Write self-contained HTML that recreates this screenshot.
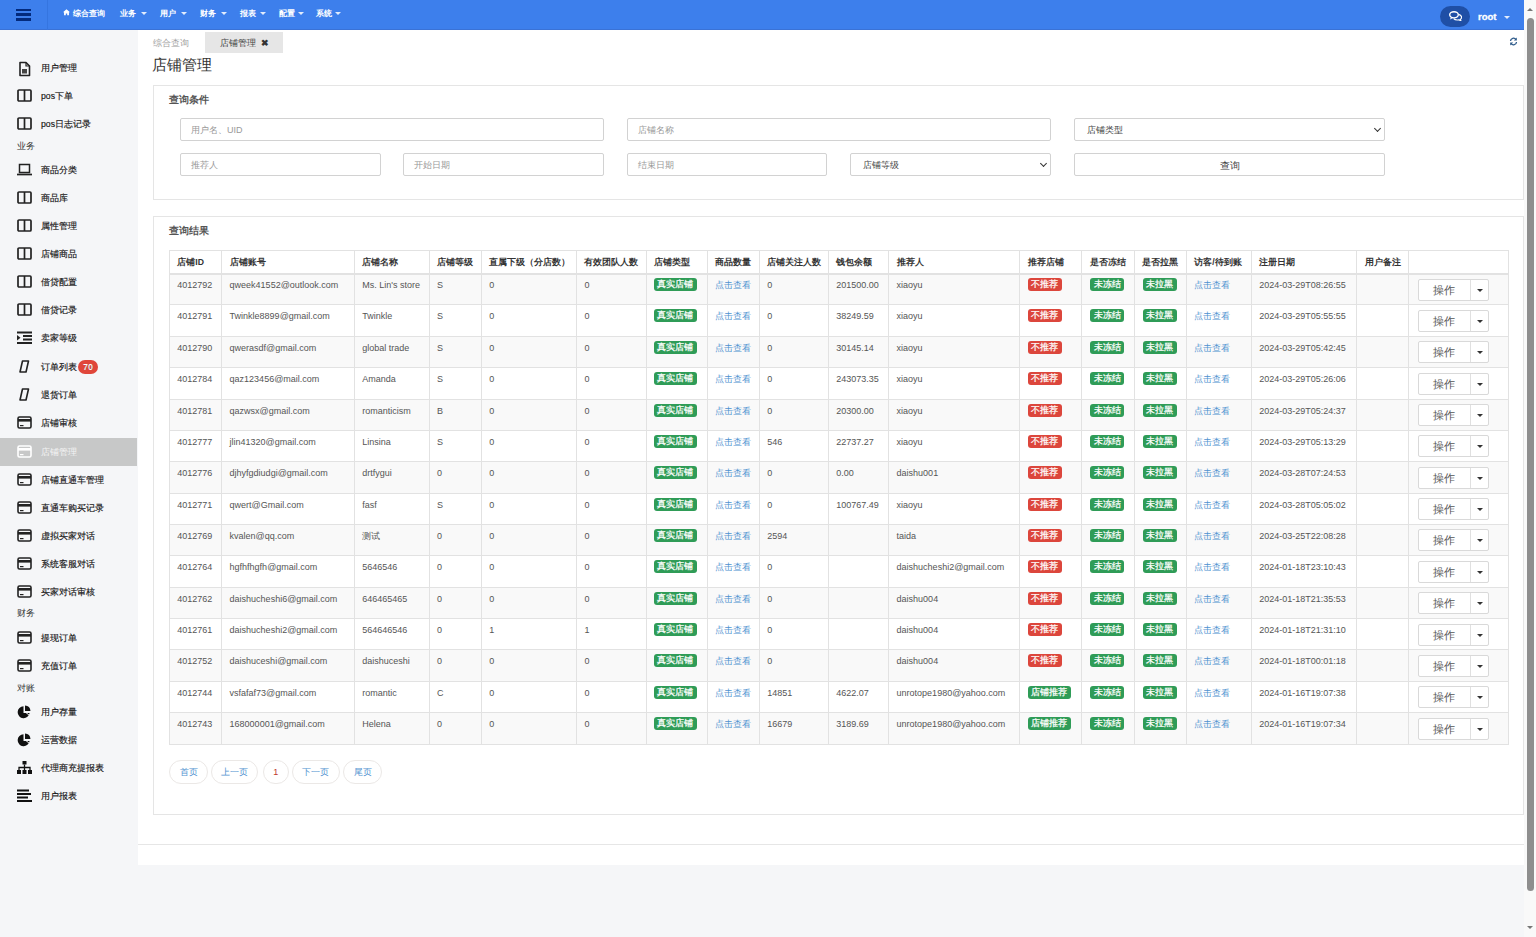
<!DOCTYPE html>
<html><head><meta charset="utf-8">
<style>
*{box-sizing:border-box;margin:0;padding:0}
html,body{width:1536px;height:937px;overflow:hidden}
body{font-family:"Liberation Sans",sans-serif;background:#f5f6f8;position:relative;color:#333;font-size:9px}
.ab{position:absolute}
.hdr{position:absolute;left:0;top:0;width:1524px;height:30px;background:#3d7fec;border-bottom:1px solid #3a72d6}
.ham{position:absolute;left:16.1px;top:8.5px;width:14.6px;height:12px}
.ham i{display:block;height:2.4px;background:#032a7c;margin-bottom:2.5px}
.hsep{position:absolute;left:47px;top:0;width:1px;height:30px;background:#3575e0}
.nav{position:absolute;top:7.5px;color:#fff;font-size:8.2px;font-weight:bold;white-space:nowrap;line-height:12px}
.caret{display:inline-block;width:0;height:0;border-left:3px solid transparent;border-right:3px solid transparent;border-top:3px solid #fff;vertical-align:middle;margin-left:3px;opacity:.85}
.chat{position:absolute;left:1440px;top:6px;width:30px;height:21px;border-radius:11px;background:#1f4fa6}
.root{position:absolute;left:1478px;top:11px;color:#fff;font-weight:bold;font-size:9.5px;line-height:11px;-webkit-text-stroke:0.3px #fff}
.it{position:absolute;left:0;width:137px;height:28px}
.it .ic{position:absolute;left:17px;top:7px;width:15px;height:14px}
.it span{position:absolute;left:41px;top:8px;font-size:8.7px;line-height:12px;color:#151515;-webkit-text-stroke:0.15px #151515;white-space:nowrap}
.it.act{background:#c7c8c8}
.it.act span{color:#f4f4f4;-webkit-text-stroke:0}
.lbl{position:absolute;left:17px;font-size:8.5px;color:#333;line-height:10px}
.badge{position:absolute;left:37px;top:-1px;background:#e0463a;color:#fff;font-weight:bold;font-style:normal;border-radius:7px;padding:0 5px;font-size:9px;line-height:14px;height:14px}
.main{position:absolute;left:138px;top:30px;width:1386px;height:835px;background:#fff}
.scroll{position:absolute;left:1524px;top:0;width:12px;height:937px;background:#f9f9f9}
.thumb{position:absolute;left:3px;top:18px;width:6.5px;height:873px;border-radius:4px;background:#8e8e8e}
.panel{position:absolute;border:1px solid #e5e5e5;background:#fff}
.ptitle{position:absolute;font-size:9.5px;font-weight:bold;color:#555;line-height:12px}
.inp{position:absolute;height:23px;border:1px solid #d2d2d2;border-radius:2px;background:#fff;font-size:9px;color:#999;padding-left:10px;line-height:23px}
.sel{color:#444;padding-left:12px}
.sel:after{content:"";position:absolute;right:4px;top:7px;width:4px;height:4px;border-right:1.5px solid #333;border-bottom:1.5px solid #333;transform:rotate(45deg)}
.vl{position:absolute;width:1px;background:#e2e2e2}
.hl{position:absolute;height:1px;background:#e2e2e2}
.rowbg{position:absolute;background:#f9f9f9}
.c{position:absolute;font-size:9px;color:#555;white-space:nowrap;line-height:12px}
.th{position:absolute;font-size:8.7px;color:#333;font-weight:bold;white-space:nowrap;line-height:12px}
.lb{position:absolute;color:#fff;font-weight:normal;-webkit-text-stroke:0.25px #fff;font-size:9px;line-height:13px;height:13px;text-align:center;border-radius:3px}
.g{background:#2f9c57}
.r{background:#dc463c}
.lk{color:#4f92d0}
.op{position:absolute;height:22px;border:1px solid #d9d9d9;border-radius:2px;background:#fff}
.op b{position:absolute;left:0;top:0;width:52px;height:20px;border-right:1px solid #e0e0e0;font-weight:normal;font-size:11px;color:#555;text-align:center;line-height:20px}
.op i{position:absolute;left:58px;top:9px;width:0;height:0;border-left:3px solid transparent;border-right:3px solid transparent;border-top:3px solid #333}
.pg{position:absolute;top:760px;height:24px;border:1px solid #ebe8e6;border-radius:12px;font-size:9px;color:#4f92d0;text-align:center;line-height:22px;background:#fff}
</style></head><body>
<div class="hdr">
<div class="ham"><i></i><i></i><i></i></div><div class="hsep"></div>
<div class="nav" style="left:63px"><svg width="7" height="6.5" viewBox="0 0 8 7" style="vertical-align:0px;margin-right:1px"><path d="M4 0L0 3.6h1.2V7h2V4.8h1.6V7h2V3.6H8z" fill="#fff"/></svg> 综合查询</div>
<div class="nav" style="left:120.0px">业务</div>
<div class="caret" style="position:absolute;left:140.5px;top:12px;margin:0"></div>
<div class="nav" style="left:160.0px">用户</div>
<div class="caret" style="position:absolute;left:180.5px;top:12px;margin:0"></div>
<div class="nav" style="left:200.0px">财务</div>
<div class="caret" style="position:absolute;left:221.0px;top:12px;margin:0"></div>
<div class="nav" style="left:240.0px">报表</div>
<div class="caret" style="position:absolute;left:259.5px;top:12px;margin:0"></div>
<div class="nav" style="left:278.5px">配置</div>
<div class="caret" style="position:absolute;left:298.0px;top:12px;margin:0"></div>
<div class="nav" style="left:315.5px">系统</div>
<div class="caret" style="position:absolute;left:335.0px;top:12px;margin:0"></div>
<div class="chat"><svg width="13" height="10" viewBox="0 0 13 10" style="position:absolute;left:9px;top:5px"><path d="M9.6 3.4c2 .5 3 1.6 3 2.9 0 .9-.5 1.6-1.3 2.1l.6 1.4-2.1-1c-.5.1-1 .2-1.6.2-1.5 0-2.8-.5-3.5-1.3" fill="none" stroke="#fff" stroke-width="1.2"/><ellipse cx="5" cy="3.8" rx="4.3" ry="3.1" fill="#1f4fa6" stroke="#fff" stroke-width="1.4"/><path d="M2 6l-1 2.4 2.8-1.3z" fill="#fff"/></svg></div>
<div class="root">root<span class="caret" style="margin-left:8px"></span></div>
</div>
<div class="it" style="top:53.5px"><div class="ic"><svg width="15" height="16" viewBox="0 0 15 16"><path d="M3 1.5h6l3.5 3.5v9.5h-9.5z" fill="none" stroke="#222" stroke-width="1.6" stroke-linejoin="round"/><path d="M9 1.5v3.5h3.5" fill="none" stroke="#222" stroke-width="1.2"/><rect x="5" y="8" width="5" height="4.5" fill="#444"/></svg></div><span>用户管理</span></div>
<div class="it" style="top:81.5px"><div class="ic"><svg width="15" height="13" viewBox="0 0 15 13"><rect x="1" y="1" width="13" height="11" rx="1" fill="none" stroke="#222" stroke-width="1.7"/><path d="M7.5 1v11" stroke="#222" stroke-width="1.7"/></svg></div><span>pos下单</span></div>
<div class="it" style="top:109.5px"><div class="ic"><svg width="15" height="13" viewBox="0 0 15 13"><rect x="1" y="1" width="13" height="11" rx="1" fill="none" stroke="#222" stroke-width="1.7"/><path d="M7.5 1v11" stroke="#222" stroke-width="1.7"/></svg></div><span>pos日志记录</span></div>
<div class="lbl" style="top:141px">业务</div>
<div class="it" style="top:155.5px"><div class="ic"><svg width="15" height="13" viewBox="0 0 15 13"><rect x="2.5" y="1.5" width="10" height="8" fill="none" stroke="#222" stroke-width="1.5"/><path d="M0 11.5h15" stroke="#222" stroke-width="1.7"/></svg></div><span>商品分类</span></div>
<div class="it" style="top:183.5px"><div class="ic"><svg width="15" height="13" viewBox="0 0 15 13"><rect x="1" y="1" width="13" height="11" rx="1" fill="none" stroke="#222" stroke-width="1.7"/><path d="M7.5 1v11" stroke="#222" stroke-width="1.7"/></svg></div><span>商品库</span></div>
<div class="it" style="top:211.5px"><div class="ic"><svg width="15" height="13" viewBox="0 0 15 13"><rect x="1" y="1" width="13" height="11" rx="1" fill="none" stroke="#222" stroke-width="1.7"/><path d="M7.5 1v11" stroke="#222" stroke-width="1.7"/></svg></div><span>属性管理</span></div>
<div class="it" style="top:239.5px"><div class="ic"><svg width="15" height="13" viewBox="0 0 15 13"><rect x="1" y="1" width="13" height="11" rx="1" fill="none" stroke="#222" stroke-width="1.7"/><path d="M7.5 1v11" stroke="#222" stroke-width="1.7"/></svg></div><span>店铺商品</span></div>
<div class="it" style="top:267.5px"><div class="ic"><svg width="15" height="13" viewBox="0 0 15 13"><rect x="1" y="1" width="13" height="11" rx="1" fill="none" stroke="#222" stroke-width="1.7"/><path d="M7.5 1v11" stroke="#222" stroke-width="1.7"/></svg></div><span>借贷配置</span></div>
<div class="it" style="top:295.5px"><div class="ic"><svg width="15" height="13" viewBox="0 0 15 13"><rect x="1" y="1" width="13" height="11" rx="1" fill="none" stroke="#222" stroke-width="1.7"/><path d="M7.5 1v11" stroke="#222" stroke-width="1.7"/></svg></div><span>借贷记录</span></div>
<div class="it" style="top:323.5px"><div class="ic"><svg width="15" height="13" viewBox="0 0 15 13"><path d="M0 1.5h15M6 5h9M6 8.5h9M0 12h15" stroke="#222" stroke-width="2"/><path d="M0 4l3.5 2.8L0 9.5z" fill="#222"/></svg></div><span>卖家等级</span></div>
<div class="it" style="top:352.5px"><div class="ic"><svg width="15" height="13" viewBox="0 0 15 13"><path d="M5.5 1h6l-2.5 11h-6z" fill="none" stroke="#222" stroke-width="1.6" stroke-linejoin="round"/></svg></div><span>订单列表<em class="badge">70</em></span></div>
<div class="it" style="top:380.5px"><div class="ic"><svg width="15" height="13" viewBox="0 0 15 13"><path d="M5.5 1h6l-2.5 11h-6z" fill="none" stroke="#222" stroke-width="1.6" stroke-linejoin="round"/></svg></div><span>退货订单</span></div>
<div class="it" style="top:408.5px"><div class="ic"><svg width="15" height="13" viewBox="0 0 15 13"><rect x="1" y="1" width="13" height="11" rx="1.5" fill="none" stroke="#222" stroke-width="1.6"/><rect x="1" y="3" width="13" height="2.6" fill="#222"/><rect x="3" y="9" width="3.5" height="1.2" fill="#222"/></svg></div><span>店铺审核</span></div>
<div class="it act" style="top:437.5px"><div class="ic"><svg width="15" height="13" viewBox="0 0 15 13"><rect x="1" y="1" width="13" height="11" rx="1.5" fill="none" stroke="#fff" stroke-width="1.6"/><rect x="1" y="3" width="13" height="2.6" fill="#fff"/><rect x="3" y="9" width="3.5" height="1.2" fill="#fff"/></svg></div><span>店铺管理</span></div>
<div class="it" style="top:465.5px"><div class="ic"><svg width="15" height="13" viewBox="0 0 15 13"><rect x="1" y="1" width="13" height="11" rx="1.5" fill="none" stroke="#222" stroke-width="1.6"/><rect x="1" y="3" width="13" height="2.6" fill="#222"/><rect x="3" y="9" width="3.5" height="1.2" fill="#222"/></svg></div><span>店铺直通车管理</span></div>
<div class="it" style="top:493.5px"><div class="ic"><svg width="15" height="13" viewBox="0 0 15 13"><rect x="1" y="1" width="13" height="11" rx="1.5" fill="none" stroke="#222" stroke-width="1.6"/><rect x="1" y="3" width="13" height="2.6" fill="#222"/><rect x="3" y="9" width="3.5" height="1.2" fill="#222"/></svg></div><span>直通车购买记录</span></div>
<div class="it" style="top:521.5px"><div class="ic"><svg width="15" height="13" viewBox="0 0 15 13"><rect x="1" y="1" width="13" height="11" rx="1.5" fill="none" stroke="#222" stroke-width="1.6"/><rect x="1" y="3" width="13" height="2.6" fill="#222"/><rect x="3" y="9" width="3.5" height="1.2" fill="#222"/></svg></div><span>虚拟买家对话</span></div>
<div class="it" style="top:549.5px"><div class="ic"><svg width="15" height="13" viewBox="0 0 15 13"><rect x="1" y="1" width="13" height="11" rx="1.5" fill="none" stroke="#222" stroke-width="1.6"/><rect x="1" y="3" width="13" height="2.6" fill="#222"/><rect x="3" y="9" width="3.5" height="1.2" fill="#222"/></svg></div><span>系统客服对话</span></div>
<div class="it" style="top:577.5px"><div class="ic"><svg width="15" height="13" viewBox="0 0 15 13"><rect x="1" y="1" width="13" height="11" rx="1.5" fill="none" stroke="#222" stroke-width="1.6"/><rect x="1" y="3" width="13" height="2.6" fill="#222"/><rect x="3" y="9" width="3.5" height="1.2" fill="#222"/></svg></div><span>买家对话审核</span></div>
<div class="lbl" style="top:608px">财务</div>
<div class="it" style="top:623.5px"><div class="ic"><svg width="15" height="13" viewBox="0 0 15 13"><rect x="1" y="1" width="13" height="11" rx="1.5" fill="none" stroke="#222" stroke-width="1.6"/><rect x="1" y="3" width="13" height="2.6" fill="#222"/><rect x="3" y="9" width="3.5" height="1.2" fill="#222"/></svg></div><span>提现订单</span></div>
<div class="it" style="top:651.5px"><div class="ic"><svg width="15" height="13" viewBox="0 0 15 13"><rect x="1" y="1" width="13" height="11" rx="1.5" fill="none" stroke="#222" stroke-width="1.6"/><rect x="1" y="3" width="13" height="2.6" fill="#222"/><rect x="3" y="9" width="3.5" height="1.2" fill="#222"/></svg></div><span>充值订单</span></div>
<div class="lbl" style="top:683px">对账</div>
<div class="it" style="top:697.5px"><div class="ic"><svg width="15" height="14" viewBox="0 0 15 14"><path d="M6.5 1.2A6 6 0 1 0 12.6 8H6.5z" fill="#111"/><path d="M8 0.5A6 6 0 0 1 13.5 6H8z" fill="#111"/><path d="M8.5 7.2l4.8 4" stroke="#f5f6f8" stroke-width="1"/></svg></div><span>用户存量</span></div>
<div class="it" style="top:725.5px"><div class="ic"><svg width="15" height="14" viewBox="0 0 15 14"><path d="M6.5 1.2A6 6 0 1 0 12.6 8H6.5z" fill="#111"/><path d="M8 0.5A6 6 0 0 1 13.5 6H8z" fill="#111"/><path d="M8.5 7.2l4.8 4" stroke="#f5f6f8" stroke-width="1"/></svg></div><span>运营数据</span></div>
<div class="it" style="top:753.5px"><div class="ic"><svg width="15" height="14" viewBox="0 0 15 14"><rect x="5.5" y="0" width="4" height="3.5" fill="#111"/><path d="M7.5 3.5v3M2 9V6.5h11V9M7.5 6.5V9" stroke="#111" stroke-width="1.3" fill="none"/><rect x="0" y="9" width="4" height="4" fill="#111"/><rect x="5.5" y="9" width="4" height="4" fill="#111"/><rect x="11" y="9" width="4" height="4" fill="#111"/></svg></div><span>代理商充提报表</span></div>
<div class="it" style="top:781.5px"><div class="ic"><svg width="15" height="13" viewBox="0 0 15 13"><path d="M0 1.5h12M0 5h14M0 8.5h11M0 12h15" stroke="#111" stroke-width="2"/></svg></div><span>用户报表</span></div>
<div class="main"></div>
<div class="ab" style="left:153px;top:37px;font-size:9px;color:#a0a0a0;line-height:12px">综合查询</div>
<div class="ab" style="left:205px;top:32px;width:78px;height:21px;background:#e6e6e6"></div>
<div class="ab" style="left:220px;top:37px;font-size:9px;color:#444;line-height:12px">店铺管理 <b style="margin-left:2px;color:#333">&#10006;</b></div>
<svg class="ab" style="left:1509px;top:37px" width="9" height="9" viewBox="0 0 9 9"><path d="M1.5 4A3 3 0 0 1 7 2.5M7.5 5A3 3 0 0 1 2 6.5" fill="none" stroke="#2d5a8a" stroke-width="1.3"/><path d="M7.8 0.5v3h-3z M1.2 8.5v-3h3z" fill="#2d5a8a"/></svg>
<div class="ab" style="left:152px;top:56px;font-size:15px;color:#333;line-height:18px">店铺管理</div>
<div class="panel" style="left:153px;top:85px;width:1371px;height:115px"></div>
<div class="ptitle" style="left:169px;top:94px">查询条件</div>
<div class="inp" style="left:180.0px;top:118.3px;width:423.7px;height:22.9px">用户名、UID</div>
<div class="inp" style="left:626.7px;top:118.3px;width:424.1px;height:22.9px">店铺名称</div>
<div class="inp sel" style="left:1073.7px;top:118.3px;width:311.7px;height:22.9px">店铺类型</div>
<div class="inp" style="left:180.0px;top:153.3px;width:200.6px;height:22.4px">推荐人</div>
<div class="inp" style="left:403.2px;top:153.3px;width:200.5px;height:22.4px">开始日期</div>
<div class="inp" style="left:626.7px;top:153.3px;width:199.9px;height:22.4px">结束日期</div>
<div class="inp sel" style="left:850.0px;top:153.3px;width:200.8px;height:22.4px">店铺等级</div>
<div class="inp" style="left:1073.7px;top:153.3px;width:311.7px;height:22.4px;color:#444;text-align:center;padding:0;font-size:9.5px">查询</div>
<div class="panel" style="left:153px;top:216px;width:1371px;height:599px"></div>
<div class="ptitle" style="left:169px;top:225px">查询结果</div>
<div class="rowbg" style="left:169.3px;top:273.60px;width:1338.8px;height:31.36px"></div>
<div class="rowbg" style="left:169.3px;top:336.32px;width:1338.8px;height:31.36px"></div>
<div class="rowbg" style="left:169.3px;top:399.04px;width:1338.8px;height:31.36px"></div>
<div class="rowbg" style="left:169.3px;top:461.76px;width:1338.8px;height:31.36px"></div>
<div class="rowbg" style="left:169.3px;top:524.48px;width:1338.8px;height:31.36px"></div>
<div class="rowbg" style="left:169.3px;top:587.20px;width:1338.8px;height:31.36px"></div>
<div class="rowbg" style="left:169.3px;top:649.92px;width:1338.8px;height:31.36px"></div>
<div class="rowbg" style="left:169.3px;top:712.64px;width:1338.8px;height:31.36px"></div>
<div class="hl" style="left:169.3px;top:250.0px;width:1339.8px"></div>
<div class="hl" style="left:169.3px;top:272.6px;width:1339.8px;height:2px"></div>
<div class="hl" style="left:169.3px;top:304.46px;width:1339.8px"></div>
<div class="hl" style="left:169.3px;top:335.82px;width:1339.8px"></div>
<div class="hl" style="left:169.3px;top:367.18px;width:1339.8px"></div>
<div class="hl" style="left:169.3px;top:398.54px;width:1339.8px"></div>
<div class="hl" style="left:169.3px;top:429.90px;width:1339.8px"></div>
<div class="hl" style="left:169.3px;top:461.26px;width:1339.8px"></div>
<div class="hl" style="left:169.3px;top:492.62px;width:1339.8px"></div>
<div class="hl" style="left:169.3px;top:523.98px;width:1339.8px"></div>
<div class="hl" style="left:169.3px;top:555.34px;width:1339.8px"></div>
<div class="hl" style="left:169.3px;top:586.70px;width:1339.8px"></div>
<div class="hl" style="left:169.3px;top:618.06px;width:1339.8px"></div>
<div class="hl" style="left:169.3px;top:649.42px;width:1339.8px"></div>
<div class="hl" style="left:169.3px;top:680.78px;width:1339.8px"></div>
<div class="hl" style="left:169.3px;top:712.14px;width:1339.8px"></div>
<div class="hl" style="left:169.3px;top:743.50px;width:1339.8px"></div>
<div class="vl" style="left:168.8px;top:250.0px;height:494.0px"></div>
<div class="vl" style="left:221.1px;top:250.0px;height:494.0px"></div>
<div class="vl" style="left:353.8px;top:250.0px;height:494.0px"></div>
<div class="vl" style="left:428.5px;top:250.0px;height:494.0px"></div>
<div class="vl" style="left:480.7px;top:250.0px;height:494.0px"></div>
<div class="vl" style="left:575.9px;top:250.0px;height:494.0px"></div>
<div class="vl" style="left:645.9px;top:250.0px;height:494.0px"></div>
<div class="vl" style="left:706.9px;top:250.0px;height:494.0px"></div>
<div class="vl" style="left:758.7px;top:250.0px;height:494.0px"></div>
<div class="vl" style="left:827.8px;top:250.0px;height:494.0px"></div>
<div class="vl" style="left:888.1px;top:250.0px;height:494.0px"></div>
<div class="vl" style="left:1019.0px;top:250.0px;height:494.0px"></div>
<div class="vl" style="left:1081.0px;top:250.0px;height:494.0px"></div>
<div class="vl" style="left:1133.8px;top:250.0px;height:494.0px"></div>
<div class="vl" style="left:1185.8px;top:250.0px;height:494.0px"></div>
<div class="vl" style="left:1250.7px;top:250.0px;height:494.0px"></div>
<div class="vl" style="left:1356.0px;top:250.0px;height:494.0px"></div>
<div class="vl" style="left:1408.1px;top:250.0px;height:494.0px"></div>
<div class="vl" style="left:1507.6px;top:250.0px;height:494.0px"></div>
<div class="th" style="left:177.3px;top:256.0px">店铺ID</div>
<div class="th" style="left:229.6px;top:256.0px">店铺账号</div>
<div class="th" style="left:362.3px;top:256.0px">店铺名称</div>
<div class="th" style="left:437.0px;top:256.0px">店铺等级</div>
<div class="th" style="left:489.2px;top:256.0px">直属下级（分店数）</div>
<div class="th" style="left:584.4px;top:256.0px">有效团队人数</div>
<div class="th" style="left:654.4px;top:256.0px">店铺类型</div>
<div class="th" style="left:715.4px;top:256.0px">商品数量</div>
<div class="th" style="left:767.2px;top:256.0px">店铺关注人数</div>
<div class="th" style="left:836.3px;top:256.0px">钱包余额</div>
<div class="th" style="left:896.6px;top:256.0px">推荐人</div>
<div class="th" style="left:1027.5px;top:256.0px">推荐店铺</div>
<div class="th" style="left:1089.5px;top:256.0px">是否冻结</div>
<div class="th" style="left:1142.3px;top:256.0px">是否拉黑</div>
<div class="th" style="left:1194.3px;top:256.0px">访客/待到账</div>
<div class="th" style="left:1259.2px;top:256.0px">注册日期</div>
<div class="th" style="left:1364.5px;top:256.0px">用户备注</div>
<div class="c" style="left:177.3px;top:279.10px">4012792</div>
<div class="c" style="left:229.6px;top:279.10px">qweek41552@outlook.com</div>
<div class="c" style="left:362.3px;top:279.10px">Ms. Lin's store</div>
<div class="c" style="left:437.0px;top:279.10px">S</div>
<div class="c" style="left:489.2px;top:279.10px">0</div>
<div class="c" style="left:584.4px;top:279.10px">0</div>
<div class="c" style="left:767.2px;top:279.10px">0</div>
<div class="c" style="left:836.3px;top:279.10px">201500.00</div>
<div class="c" style="left:896.6px;top:279.10px">xiaoyu</div>
<div class="c" style="left:1259.2px;top:279.10px">2024-03-29T08:26:55</div>
<div class="lb g" style="left:653.9px;top:278.10px;width:43px">真实店铺</div>
<div class="c lk" style="left:715.4px;top:279.10px">点击查看</div>
<div class="lb r" style="left:1027.5px;top:278.10px;width:34px">不推荐</div>
<div class="lb g" style="left:1090.0px;top:278.10px;width:34px">未冻结</div>
<div class="lb g" style="left:1142.8px;top:278.10px;width:34px">未拉黑</div>
<div class="c lk" style="left:1194.3px;top:279.10px">点击查看</div>
<div class="op" style="left:1417.5px;top:278.60px;width:71px"><b>操作</b><i></i></div>
<div class="c" style="left:177.3px;top:310.46px">4012791</div>
<div class="c" style="left:229.6px;top:310.46px">Twinkle8899@gmail.com</div>
<div class="c" style="left:362.3px;top:310.46px">Twinkle</div>
<div class="c" style="left:437.0px;top:310.46px">S</div>
<div class="c" style="left:489.2px;top:310.46px">0</div>
<div class="c" style="left:584.4px;top:310.46px">0</div>
<div class="c" style="left:767.2px;top:310.46px">0</div>
<div class="c" style="left:836.3px;top:310.46px">38249.59</div>
<div class="c" style="left:896.6px;top:310.46px">xiaoyu</div>
<div class="c" style="left:1259.2px;top:310.46px">2024-03-29T05:55:55</div>
<div class="lb g" style="left:653.9px;top:309.46px;width:43px">真实店铺</div>
<div class="c lk" style="left:715.4px;top:310.46px">点击查看</div>
<div class="lb r" style="left:1027.5px;top:309.46px;width:34px">不推荐</div>
<div class="lb g" style="left:1090.0px;top:309.46px;width:34px">未冻结</div>
<div class="lb g" style="left:1142.8px;top:309.46px;width:34px">未拉黑</div>
<div class="c lk" style="left:1194.3px;top:310.46px">点击查看</div>
<div class="op" style="left:1417.5px;top:309.96px;width:71px"><b>操作</b><i></i></div>
<div class="c" style="left:177.3px;top:341.82px">4012790</div>
<div class="c" style="left:229.6px;top:341.82px">qwerasdf@gmail.com</div>
<div class="c" style="left:362.3px;top:341.82px">global trade</div>
<div class="c" style="left:437.0px;top:341.82px">S</div>
<div class="c" style="left:489.2px;top:341.82px">0</div>
<div class="c" style="left:584.4px;top:341.82px">0</div>
<div class="c" style="left:767.2px;top:341.82px">0</div>
<div class="c" style="left:836.3px;top:341.82px">30145.14</div>
<div class="c" style="left:896.6px;top:341.82px">xiaoyu</div>
<div class="c" style="left:1259.2px;top:341.82px">2024-03-29T05:42:45</div>
<div class="lb g" style="left:653.9px;top:340.82px;width:43px">真实店铺</div>
<div class="c lk" style="left:715.4px;top:341.82px">点击查看</div>
<div class="lb r" style="left:1027.5px;top:340.82px;width:34px">不推荐</div>
<div class="lb g" style="left:1090.0px;top:340.82px;width:34px">未冻结</div>
<div class="lb g" style="left:1142.8px;top:340.82px;width:34px">未拉黑</div>
<div class="c lk" style="left:1194.3px;top:341.82px">点击查看</div>
<div class="op" style="left:1417.5px;top:341.32px;width:71px"><b>操作</b><i></i></div>
<div class="c" style="left:177.3px;top:373.18px">4012784</div>
<div class="c" style="left:229.6px;top:373.18px">qaz123456@mail.com</div>
<div class="c" style="left:362.3px;top:373.18px">Amanda</div>
<div class="c" style="left:437.0px;top:373.18px">S</div>
<div class="c" style="left:489.2px;top:373.18px">0</div>
<div class="c" style="left:584.4px;top:373.18px">0</div>
<div class="c" style="left:767.2px;top:373.18px">0</div>
<div class="c" style="left:836.3px;top:373.18px">243073.35</div>
<div class="c" style="left:896.6px;top:373.18px">xiaoyu</div>
<div class="c" style="left:1259.2px;top:373.18px">2024-03-29T05:26:06</div>
<div class="lb g" style="left:653.9px;top:372.18px;width:43px">真实店铺</div>
<div class="c lk" style="left:715.4px;top:373.18px">点击查看</div>
<div class="lb r" style="left:1027.5px;top:372.18px;width:34px">不推荐</div>
<div class="lb g" style="left:1090.0px;top:372.18px;width:34px">未冻结</div>
<div class="lb g" style="left:1142.8px;top:372.18px;width:34px">未拉黑</div>
<div class="c lk" style="left:1194.3px;top:373.18px">点击查看</div>
<div class="op" style="left:1417.5px;top:372.68px;width:71px"><b>操作</b><i></i></div>
<div class="c" style="left:177.3px;top:404.54px">4012781</div>
<div class="c" style="left:229.6px;top:404.54px">qazwsx@gmail.com</div>
<div class="c" style="left:362.3px;top:404.54px">romanticism</div>
<div class="c" style="left:437.0px;top:404.54px">B</div>
<div class="c" style="left:489.2px;top:404.54px">0</div>
<div class="c" style="left:584.4px;top:404.54px">0</div>
<div class="c" style="left:767.2px;top:404.54px">0</div>
<div class="c" style="left:836.3px;top:404.54px">20300.00</div>
<div class="c" style="left:896.6px;top:404.54px">xiaoyu</div>
<div class="c" style="left:1259.2px;top:404.54px">2024-03-29T05:24:37</div>
<div class="lb g" style="left:653.9px;top:403.54px;width:43px">真实店铺</div>
<div class="c lk" style="left:715.4px;top:404.54px">点击查看</div>
<div class="lb r" style="left:1027.5px;top:403.54px;width:34px">不推荐</div>
<div class="lb g" style="left:1090.0px;top:403.54px;width:34px">未冻结</div>
<div class="lb g" style="left:1142.8px;top:403.54px;width:34px">未拉黑</div>
<div class="c lk" style="left:1194.3px;top:404.54px">点击查看</div>
<div class="op" style="left:1417.5px;top:404.04px;width:71px"><b>操作</b><i></i></div>
<div class="c" style="left:177.3px;top:435.90px">4012777</div>
<div class="c" style="left:229.6px;top:435.90px">jlin41320@gmail.com</div>
<div class="c" style="left:362.3px;top:435.90px">Linsina</div>
<div class="c" style="left:437.0px;top:435.90px">S</div>
<div class="c" style="left:489.2px;top:435.90px">0</div>
<div class="c" style="left:584.4px;top:435.90px">0</div>
<div class="c" style="left:767.2px;top:435.90px">546</div>
<div class="c" style="left:836.3px;top:435.90px">22737.27</div>
<div class="c" style="left:896.6px;top:435.90px">xiaoyu</div>
<div class="c" style="left:1259.2px;top:435.90px">2024-03-29T05:13:29</div>
<div class="lb g" style="left:653.9px;top:434.90px;width:43px">真实店铺</div>
<div class="c lk" style="left:715.4px;top:435.90px">点击查看</div>
<div class="lb r" style="left:1027.5px;top:434.90px;width:34px">不推荐</div>
<div class="lb g" style="left:1090.0px;top:434.90px;width:34px">未冻结</div>
<div class="lb g" style="left:1142.8px;top:434.90px;width:34px">未拉黑</div>
<div class="c lk" style="left:1194.3px;top:435.90px">点击查看</div>
<div class="op" style="left:1417.5px;top:435.40px;width:71px"><b>操作</b><i></i></div>
<div class="c" style="left:177.3px;top:467.26px">4012776</div>
<div class="c" style="left:229.6px;top:467.26px">djhyfgdiudgi@gmail.com</div>
<div class="c" style="left:362.3px;top:467.26px">drtfygui</div>
<div class="c" style="left:437.0px;top:467.26px">0</div>
<div class="c" style="left:489.2px;top:467.26px">0</div>
<div class="c" style="left:584.4px;top:467.26px">0</div>
<div class="c" style="left:767.2px;top:467.26px">0</div>
<div class="c" style="left:836.3px;top:467.26px">0.00</div>
<div class="c" style="left:896.6px;top:467.26px">daishu001</div>
<div class="c" style="left:1259.2px;top:467.26px">2024-03-28T07:24:53</div>
<div class="lb g" style="left:653.9px;top:466.26px;width:43px">真实店铺</div>
<div class="c lk" style="left:715.4px;top:467.26px">点击查看</div>
<div class="lb r" style="left:1027.5px;top:466.26px;width:34px">不推荐</div>
<div class="lb g" style="left:1090.0px;top:466.26px;width:34px">未冻结</div>
<div class="lb g" style="left:1142.8px;top:466.26px;width:34px">未拉黑</div>
<div class="c lk" style="left:1194.3px;top:467.26px">点击查看</div>
<div class="op" style="left:1417.5px;top:466.76px;width:71px"><b>操作</b><i></i></div>
<div class="c" style="left:177.3px;top:498.62px">4012771</div>
<div class="c" style="left:229.6px;top:498.62px">qwert@Gmail.com</div>
<div class="c" style="left:362.3px;top:498.62px">fasf</div>
<div class="c" style="left:437.0px;top:498.62px">S</div>
<div class="c" style="left:489.2px;top:498.62px">0</div>
<div class="c" style="left:584.4px;top:498.62px">0</div>
<div class="c" style="left:767.2px;top:498.62px">0</div>
<div class="c" style="left:836.3px;top:498.62px">100767.49</div>
<div class="c" style="left:896.6px;top:498.62px">xiaoyu</div>
<div class="c" style="left:1259.2px;top:498.62px">2024-03-28T05:05:02</div>
<div class="lb g" style="left:653.9px;top:497.62px;width:43px">真实店铺</div>
<div class="c lk" style="left:715.4px;top:498.62px">点击查看</div>
<div class="lb r" style="left:1027.5px;top:497.62px;width:34px">不推荐</div>
<div class="lb g" style="left:1090.0px;top:497.62px;width:34px">未冻结</div>
<div class="lb g" style="left:1142.8px;top:497.62px;width:34px">未拉黑</div>
<div class="c lk" style="left:1194.3px;top:498.62px">点击查看</div>
<div class="op" style="left:1417.5px;top:498.12px;width:71px"><b>操作</b><i></i></div>
<div class="c" style="left:177.3px;top:529.98px">4012769</div>
<div class="c" style="left:229.6px;top:529.98px">kvalen@qq.com</div>
<div class="c" style="left:362.3px;top:529.98px">测试</div>
<div class="c" style="left:437.0px;top:529.98px">0</div>
<div class="c" style="left:489.2px;top:529.98px">0</div>
<div class="c" style="left:584.4px;top:529.98px">0</div>
<div class="c" style="left:767.2px;top:529.98px">2594</div>
<div class="c" style="left:896.6px;top:529.98px">taida</div>
<div class="c" style="left:1259.2px;top:529.98px">2024-03-25T22:08:28</div>
<div class="lb g" style="left:653.9px;top:528.98px;width:43px">真实店铺</div>
<div class="c lk" style="left:715.4px;top:529.98px">点击查看</div>
<div class="lb r" style="left:1027.5px;top:528.98px;width:34px">不推荐</div>
<div class="lb g" style="left:1090.0px;top:528.98px;width:34px">未冻结</div>
<div class="lb g" style="left:1142.8px;top:528.98px;width:34px">未拉黑</div>
<div class="c lk" style="left:1194.3px;top:529.98px">点击查看</div>
<div class="op" style="left:1417.5px;top:529.48px;width:71px"><b>操作</b><i></i></div>
<div class="c" style="left:177.3px;top:561.34px">4012764</div>
<div class="c" style="left:229.6px;top:561.34px">hgfhfhgfh@gmail.com</div>
<div class="c" style="left:362.3px;top:561.34px">5646546</div>
<div class="c" style="left:437.0px;top:561.34px">0</div>
<div class="c" style="left:489.2px;top:561.34px">0</div>
<div class="c" style="left:584.4px;top:561.34px">0</div>
<div class="c" style="left:767.2px;top:561.34px">0</div>
<div class="c" style="left:896.6px;top:561.34px">daishucheshi2@gmail.com</div>
<div class="c" style="left:1259.2px;top:561.34px">2024-01-18T23:10:43</div>
<div class="lb g" style="left:653.9px;top:560.34px;width:43px">真实店铺</div>
<div class="c lk" style="left:715.4px;top:561.34px">点击查看</div>
<div class="lb r" style="left:1027.5px;top:560.34px;width:34px">不推荐</div>
<div class="lb g" style="left:1090.0px;top:560.34px;width:34px">未冻结</div>
<div class="lb g" style="left:1142.8px;top:560.34px;width:34px">未拉黑</div>
<div class="c lk" style="left:1194.3px;top:561.34px">点击查看</div>
<div class="op" style="left:1417.5px;top:560.84px;width:71px"><b>操作</b><i></i></div>
<div class="c" style="left:177.3px;top:592.70px">4012762</div>
<div class="c" style="left:229.6px;top:592.70px">daishucheshi6@gmail.com</div>
<div class="c" style="left:362.3px;top:592.70px">646465465</div>
<div class="c" style="left:437.0px;top:592.70px">0</div>
<div class="c" style="left:489.2px;top:592.70px">0</div>
<div class="c" style="left:584.4px;top:592.70px">0</div>
<div class="c" style="left:767.2px;top:592.70px">0</div>
<div class="c" style="left:896.6px;top:592.70px">daishu004</div>
<div class="c" style="left:1259.2px;top:592.70px">2024-01-18T21:35:53</div>
<div class="lb g" style="left:653.9px;top:591.70px;width:43px">真实店铺</div>
<div class="c lk" style="left:715.4px;top:592.70px">点击查看</div>
<div class="lb r" style="left:1027.5px;top:591.70px;width:34px">不推荐</div>
<div class="lb g" style="left:1090.0px;top:591.70px;width:34px">未冻结</div>
<div class="lb g" style="left:1142.8px;top:591.70px;width:34px">未拉黑</div>
<div class="c lk" style="left:1194.3px;top:592.70px">点击查看</div>
<div class="op" style="left:1417.5px;top:592.20px;width:71px"><b>操作</b><i></i></div>
<div class="c" style="left:177.3px;top:624.06px">4012761</div>
<div class="c" style="left:229.6px;top:624.06px">daishucheshi2@gmail.com</div>
<div class="c" style="left:362.3px;top:624.06px">564646546</div>
<div class="c" style="left:437.0px;top:624.06px">0</div>
<div class="c" style="left:489.2px;top:624.06px">1</div>
<div class="c" style="left:584.4px;top:624.06px">1</div>
<div class="c" style="left:767.2px;top:624.06px">0</div>
<div class="c" style="left:896.6px;top:624.06px">daishu004</div>
<div class="c" style="left:1259.2px;top:624.06px">2024-01-18T21:31:10</div>
<div class="lb g" style="left:653.9px;top:623.06px;width:43px">真实店铺</div>
<div class="c lk" style="left:715.4px;top:624.06px">点击查看</div>
<div class="lb r" style="left:1027.5px;top:623.06px;width:34px">不推荐</div>
<div class="lb g" style="left:1090.0px;top:623.06px;width:34px">未冻结</div>
<div class="lb g" style="left:1142.8px;top:623.06px;width:34px">未拉黑</div>
<div class="c lk" style="left:1194.3px;top:624.06px">点击查看</div>
<div class="op" style="left:1417.5px;top:623.56px;width:71px"><b>操作</b><i></i></div>
<div class="c" style="left:177.3px;top:655.42px">4012752</div>
<div class="c" style="left:229.6px;top:655.42px">daishuceshi@gmail.com</div>
<div class="c" style="left:362.3px;top:655.42px">daishuceshi</div>
<div class="c" style="left:437.0px;top:655.42px">0</div>
<div class="c" style="left:489.2px;top:655.42px">0</div>
<div class="c" style="left:584.4px;top:655.42px">0</div>
<div class="c" style="left:767.2px;top:655.42px">0</div>
<div class="c" style="left:896.6px;top:655.42px">daishu004</div>
<div class="c" style="left:1259.2px;top:655.42px">2024-01-18T00:01:18</div>
<div class="lb g" style="left:653.9px;top:654.42px;width:43px">真实店铺</div>
<div class="c lk" style="left:715.4px;top:655.42px">点击查看</div>
<div class="lb r" style="left:1027.5px;top:654.42px;width:34px">不推荐</div>
<div class="lb g" style="left:1090.0px;top:654.42px;width:34px">未冻结</div>
<div class="lb g" style="left:1142.8px;top:654.42px;width:34px">未拉黑</div>
<div class="c lk" style="left:1194.3px;top:655.42px">点击查看</div>
<div class="op" style="left:1417.5px;top:654.92px;width:71px"><b>操作</b><i></i></div>
<div class="c" style="left:177.3px;top:686.78px">4012744</div>
<div class="c" style="left:229.6px;top:686.78px">vsfafaf73@gmail.com</div>
<div class="c" style="left:362.3px;top:686.78px">romantic</div>
<div class="c" style="left:437.0px;top:686.78px">C</div>
<div class="c" style="left:489.2px;top:686.78px">0</div>
<div class="c" style="left:584.4px;top:686.78px">0</div>
<div class="c" style="left:767.2px;top:686.78px">14851</div>
<div class="c" style="left:836.3px;top:686.78px">4622.07</div>
<div class="c" style="left:896.6px;top:686.78px">unrotope1980@yahoo.com</div>
<div class="c" style="left:1259.2px;top:686.78px">2024-01-16T19:07:38</div>
<div class="lb g" style="left:653.9px;top:685.78px;width:43px">真实店铺</div>
<div class="c lk" style="left:715.4px;top:686.78px">点击查看</div>
<div class="lb g" style="left:1027.5px;top:685.78px;width:43px">店铺推荐</div>
<div class="lb g" style="left:1090.0px;top:685.78px;width:34px">未冻结</div>
<div class="lb g" style="left:1142.8px;top:685.78px;width:34px">未拉黑</div>
<div class="c lk" style="left:1194.3px;top:686.78px">点击查看</div>
<div class="op" style="left:1417.5px;top:686.28px;width:71px"><b>操作</b><i></i></div>
<div class="c" style="left:177.3px;top:718.14px">4012743</div>
<div class="c" style="left:229.6px;top:718.14px">168000001@gmail.com</div>
<div class="c" style="left:362.3px;top:718.14px">Helena</div>
<div class="c" style="left:437.0px;top:718.14px">0</div>
<div class="c" style="left:489.2px;top:718.14px">0</div>
<div class="c" style="left:584.4px;top:718.14px">0</div>
<div class="c" style="left:767.2px;top:718.14px">16679</div>
<div class="c" style="left:836.3px;top:718.14px">3189.69</div>
<div class="c" style="left:896.6px;top:718.14px">unrotope1980@yahoo.com</div>
<div class="c" style="left:1259.2px;top:718.14px">2024-01-16T19:07:34</div>
<div class="lb g" style="left:653.9px;top:717.14px;width:43px">真实店铺</div>
<div class="c lk" style="left:715.4px;top:718.14px">点击查看</div>
<div class="lb g" style="left:1027.5px;top:717.14px;width:43px">店铺推荐</div>
<div class="lb g" style="left:1090.0px;top:717.14px;width:34px">未冻结</div>
<div class="lb g" style="left:1142.8px;top:717.14px;width:34px">未拉黑</div>
<div class="c lk" style="left:1194.3px;top:718.14px">点击查看</div>
<div class="op" style="left:1417.5px;top:717.64px;width:71px"><b>操作</b><i></i></div>
<div class="pg" style="left:169.0px;width:39.2px;color:#4f92d0">首页</div>
<div class="pg" style="left:211.0px;width:47.4px;color:#4f92d0">上一页</div>
<div class="pg" style="left:262.7px;width:26.3px;color:#c0392b">1</div>
<div class="pg" style="left:292.0px;width:47.5px;color:#4f92d0">下一页</div>
<div class="pg" style="left:343.4px;width:38.6px;color:#4f92d0">尾页</div>
<div class="ab" style="left:138px;top:843.5px;width:1386px;height:1px;background:#e6e6e6"></div>
<div class="scroll"><div class="thumb"></div>
<div class="ab" style="left:3px;top:8px;width:0;height:0;border-left:3px solid transparent;border-right:3px solid transparent;border-bottom:3px solid #777"></div>
<div class="ab" style="left:3px;top:926px;width:0;height:0;border-left:3px solid transparent;border-right:3px solid transparent;border-top:3px solid #777"></div>
</div>
</body></html>
